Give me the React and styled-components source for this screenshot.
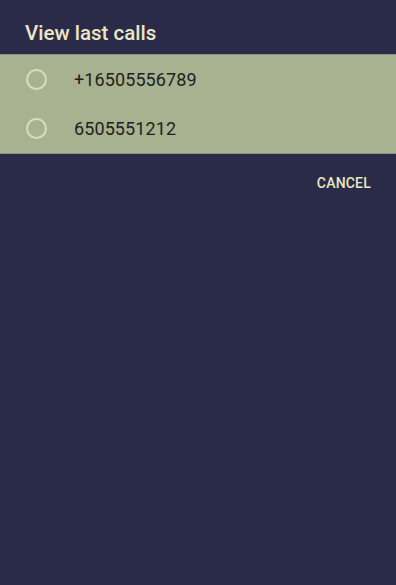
import React from "react";
import styled, { createGlobalStyle } from "styled-components";

const Global = createGlobalStyle`
  html, body { margin: 0; padding: 0; background: #2a2b48; }
  body { font-family: Roboto, "Noto Sans", sans-serif; }
`;

const Screen = styled.div`
  width: 396px;
  height: 585px;
  background: #2a2b48;
  display: flex;
  flex-direction: column;
`;

const Title = styled.h1`
  margin: 0;
  height: 54px;
  box-sizing: border-box;
  padding: 21px 0 0 25px;
  font-size: 20.5px;
  line-height: 24px;
  font-weight: 500;
  color: #ece6c4;
`;

const List = styled.div`
  background: #a8b290;
  border-top: 1px solid #8c9283;
  border-bottom: 1px solid #8c9283;
  display: flex;
  flex-direction: column;
`;

const Row = styled.label`
  display: flex;
  align-items: center;
  height: 49px;
  padding-left: 26px;
  gap: 27px;
  cursor: pointer;
`;

const Radio = styled.span`
  width: 17px;
  height: 17px;
  border-radius: 50%;
  border: 2px solid #dcdbbd;
  flex: none;
`;

const Number = styled.span`
  font-size: 18px;
  color: #1f2120;
  letter-spacing: 0.1px;
`;

const Actions = styled.div`
  display: flex;
  justify-content: flex-end;
  padding: 21px 25px 0 0;
`;

const Button = styled.button`
  background: none;
  border: none;
  padding: 0;
  font-family: Roboto, sans-serif;
  font-weight: 500;
  font-size: 14px;
  color: #ece6c4;
  letter-spacing: 0.2px;
`;

export default function App() {
  const numbers = ["+16505556789", "6505551212"];
  return (
    <Screen>
      <Global />
      <Title>View last calls</Title>
      <List>
        {numbers.map((n) => (
          <Row key={n}>
            <Radio />
            <Number>{n}</Number>
          </Row>
        ))}
      </List>
      <Actions>
        <Button>CANCEL</Button>
      </Actions>
    </Screen>
  );
}
